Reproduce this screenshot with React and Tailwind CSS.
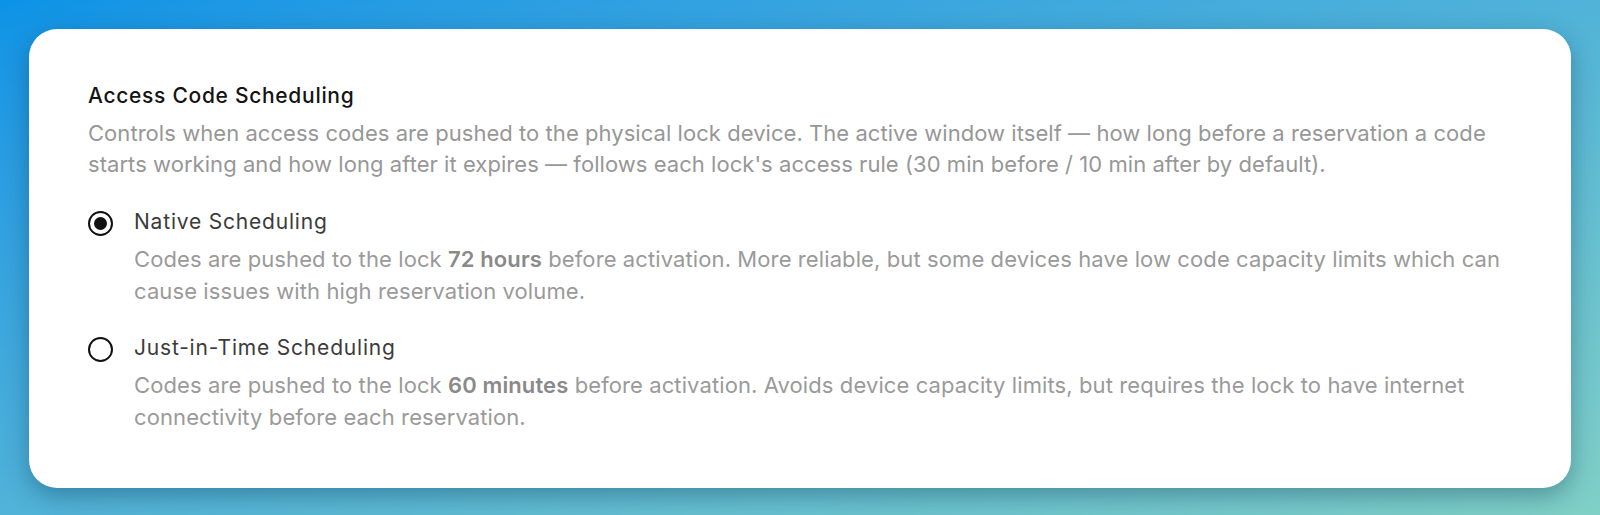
import React, { useState } from 'react';

const options = [
  {
    id: 'native',
    label: 'Native Scheduling',
    before: 'Codes are pushed to the lock ',
    strong: '72 hours',
    after:
      ' before activation. More reliable, but some devices have low code capacity limits which can cause issues with high reservation volume.',
  },
  {
    id: 'jit',
    label: 'Just-in-Time Scheduling',
    before: 'Codes are pushed to the lock ',
    strong: '60 minutes',
    after:
      ' before activation. Avoids device capacity limits, but requires the lock to have internet connectivity before each reservation.',
  },
];

function Radio({ checked }) {
  return (
    <span className="mt-[3px] flex h-[25px] w-[25px] shrink-0 items-center justify-center rounded-full border-2 border-[#111]">
      {checked && <span className="h-[13px] w-[13px] rounded-full bg-[#111]" />}
    </span>
  );
}

export default function App() {
  const [mode, setMode] = useState('native');

  return (
    <div className="min-h-[515px] bg-gradient-to-br from-[#0b93e6] to-[#80d0c6] p-[29px] font-['Inter',sans-serif]">
      <div className="rounded-[28px] bg-white pl-[59px] pr-[52px] pt-[53px] pb-[55px] shadow-[0_8px_24px_rgba(0,40,70,0.35)]">
        <h2 className="text-[21px] font-medium leading-[28px] tracking-[0.7px] text-[#141414]">
          Access Code Scheduling
        </h2>
        <p className="mt-[8px] text-[22px] leading-[31px] tracking-[0.05px] text-[#979797]">
          Controls when access codes are pushed to the physical lock device. The active window itself — how long
          before a reservation a code starts working and how long after it expires — follows each lock's access rule
          (30 min before / 10 min after by default).
        </p>

        <div className="mt-[28px] flex flex-col gap-[27px]">
          {options.map((opt) => (
            <label key={opt.id} className="flex cursor-pointer gap-[21px]" onClick={() => setMode(opt.id)}>
              <Radio checked={mode === opt.id} />
              <div>
                <div className="text-[21px] leading-[28px] tracking-[0.8px] text-[#3b3b3b]">{opt.label}</div>
                <p className="mt-[7px] text-[22px] leading-[32px] tracking-[0.1px] text-[#9a9a9a]">
                  {opt.before}
                  <span className="font-semibold text-[#8a8a8a]">{opt.strong}</span>
                  {opt.after}
                </p>
              </div>
            </label>
          ))}
        </div>
      </div>
    </div>
  );
}
